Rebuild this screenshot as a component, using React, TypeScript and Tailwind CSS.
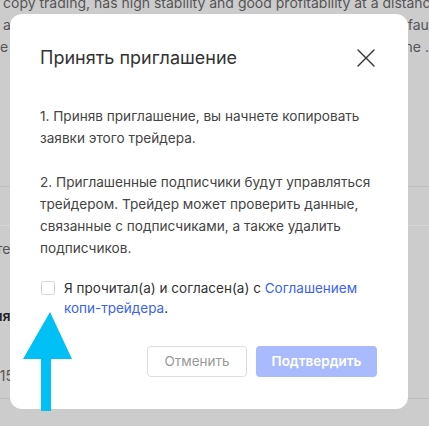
/**
 * Dimmed page behind the dialog
 */
const BackgroundPage = () => (
    <div className="relative h-[426px] w-[429px] overflow-hidden bg-[#cccccc] font-['Inter',sans-serif] text-[14px] text-[#555]">
        <p className="-mt-[8px] whitespace-nowrap pl-[3px] leading-[22px]">
            copy trading, has high stability and good profitability at a distance.
        </p>
        <div className="flex justify-between leading-[22px]">
            <span className="pl-[3px]">a</span>
            <span className="-mr-[8px]">efault</span>
        </div>
        <div className="flex justify-between leading-[22px]">
            <span>e</span>
            <span className="-mr-[8px]">he ...</span>
        </div>
        <div className="mt-[128px] h-px w-full bg-[#c0c0c0]" />
        <div className="mt-[38px] h-px w-full bg-[#d6d6d6]" />
        <div className="mt-[12px] -ml-[4px] leading-[22px]">тер</div>
        <div className="mt-[45px] -ml-[6px] font-semibold leading-[22px] text-[#222]">ия</div>
        <div className="mt-[38px] -ml-[6px] leading-[22px]">115</div>
        <div className="mt-[11px] h-px w-full bg-[#bdbdbd]" />
    </div>
);

const CloseIcon = () => (
    <svg width="18" height="18" viewBox="0 0 18 18" className="mr-[3px] shrink-0">
        <path d="M1 1L17 17M17 1L1 17" stroke="#333" strokeWidth="1.4" strokeLinecap="round" />
    </svg>
);

const Dialog = () => (
    <div className="absolute left-[10px] top-[14px] w-[398px] rounded-[12px] bg-white px-[30px] pt-[32px] pb-[32px] font-['Inter',sans-serif] text-[#333]">
        <div className="flex items-center justify-between">
            <h2 className="text-[18px] leading-[24px] font-normal text-[#333]">
                Принять приглашение
            </h2>
            <CloseIcon />
        </div>
        <div className="mt-[35px] text-[13.6px] leading-[22px] text-[#444]">
            <p>1. Приняв приглашение, вы начнете копировать заявки этого трейдера.</p>
            <p className="mt-[22px]">
                2. Приглашенные подписчики будут управляться трейдером. Трейдер может
                проверить данные, связанные с подписчиками, а также удалить подписчиков.
            </p>
        </div>
        <div className="mt-[19px] flex items-start gap-[9px] text-[13.5px] leading-[20px] text-[#333]">
            <span className="mt-[3px] ml-px h-[14px] w-[14px] shrink-0 rounded-[2px] border border-[#d9d9d9] bg-white" />
            <p>
                Я прочитал(а) и согласен(а) с{" "}
                <span className="text-[#3b63f2]">Соглашением копи-трейдера</span>.
            </p>
        </div>
        <div className="mt-[28px] flex justify-end gap-[9px]">
            <button className="h-[31px] w-[100px] rounded-[4px] border border-[#dddddd] bg-white text-[13.5px] text-[#999]">
                Отменить
            </button>
            <button className="mr-px h-[31px] w-[121px] rounded-[4px] bg-[#aabbfd] text-[13.5px] font-semibold text-white">
                Подтвердить
            </button>
        </div>
    </div>
);

/** Annotation arrow pointing at the checkbox */
const Arrow = () => (
    <svg className="absolute left-0 top-0" width="429" height="426" viewBox="0 0 429 426">
        <polygon points="50,312 72,359 51,359 51,411 41,411 41,359 23,359" fill="#00c0f5" />
    </svg>
);

export default function App() {
    return (
        <div className="relative h-[426px] w-[429px]">
            <BackgroundPage />
            <Dialog />
            <Arrow />
        </div>
    );
}
